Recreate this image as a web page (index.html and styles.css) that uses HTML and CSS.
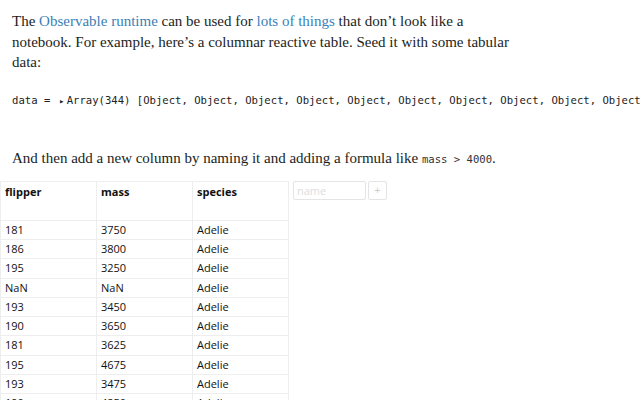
FILE: index.html
```html
<!DOCTYPE html>
<html>
<head>
<meta charset="utf-8">
<link rel="stylesheet" href="styles.css">
</head>
<body>
<div class="page">
  <p class="prose">The <a href="#">Observable runtime</a> can be used for <a href="#">lots of things</a> that don’t look like a notebook. For example, here’s a columnar reactive table. Seed it with some tabular data:</p>
  <div class="code">data = <span class="caret">▸</span>Array(344) [Object, Object, Object, Object, Object, Object, Object, Object, Object, Object, Object, Object]</div>
  <p class="prose second">And then add a new column by naming it and adding a formula like <code>mass &gt; 4000</code>.</p>
  <div class="tablerow">
    <table class="grid">
      <thead>
        <tr><th>flipper</th><th>mass</th><th>species</th></tr>
      </thead>
      <tbody>
        <tr><td>181</td><td>3750</td><td>Adelie</td></tr>
        <tr><td>186</td><td>3800</td><td>Adelie</td></tr>
        <tr><td>195</td><td>3250</td><td>Adelie</td></tr>
        <tr><td>NaN</td><td>NaN</td><td>Adelie</td></tr>
        <tr><td>193</td><td>3450</td><td>Adelie</td></tr>
        <tr><td>190</td><td>3650</td><td>Adelie</td></tr>
        <tr><td>181</td><td>3625</td><td>Adelie</td></tr>
        <tr><td>195</td><td>4675</td><td>Adelie</td></tr>
        <tr><td>193</td><td>3475</td><td>Adelie</td></tr>
        <tr><td>190</td><td>4250</td><td>Adelie</td></tr>
      </tbody>
    </table>
    <div class="addform">
      <input class="name" placeholder="name">
      <button class="plus">+</button>
    </div>
  </div>
</div>
</body>
</html>
```
FILE: styles.css
```css
html, body {
  margin: 0;
  padding: 0;
  background: #fff;
  overflow: hidden;
}
.page {
  width: 640px;
  height: 400px;
  overflow: hidden;
}
.prose {
  font-family: "Liberation Serif", serif;
  font-size: 15px;
  line-height: 20.7px;
  color: #1b1e23;
  margin: 0;
  padding: 11px 12px 0 12px;
  width: 505px;
}
.prose a {
  color: #3b7fb6;
  text-decoration: none;
}
.prose code {
  font-family: "DejaVu Sans Mono", monospace;
  font-size: 10.6px;
  color: #333;
}
.second {
  padding-top: 39px;
  width: 600px;
}
.code {
  font-family: "DejaVu Sans Mono", monospace;
  font-size: 10.6px;
  color: #222;
  white-space: nowrap;
  padding: 19px 0 0 12px;
  line-height: 16px;
}
.caret {
  display: inline-block;
  font-size: 9px;
  width: 10px;
  text-align: center;
}
.tablerow {
  display: flex;
  align-items: flex-start;
  gap: 4px;
  margin-top: 11px;
}
.grid {
  border-collapse: collapse;
  font-family: "Open Sans", sans-serif;
  font-size: 11px;
  color: #111;
}
.grid th, .grid td {
  width: 96px;
  box-sizing: border-box;
  border: 1px solid #eee;
  text-align: left;
  padding: 0 4px;
  vertical-align: top;
}
.grid th {
  height: 39px;
  padding-top: 2px;
  font-weight: bold;
}
.grid td {
  height: 19.25px;
  line-height: 18px;
}
.addform {
  display: flex;
  gap: 2px;
}
.name {
  width: 73px;
  height: 19px;
  box-sizing: border-box;
  border: 1px solid #e4e4e4;
  border-radius: 2px;
  font-family: "Open Sans", sans-serif;
  font-size: 11px;
  padding: 0 3px;
  color: #333;
  outline: none;
}
.name::placeholder {
  color: #ddd;
}
.plus {
  width: 19px;
  height: 19px;
  box-sizing: border-box;
  border: 1px solid #e4e4e4;
  border-radius: 2px;
  background: #fff;
  color: #ccc;
  font-size: 10px;
  padding: 0;
}
```
